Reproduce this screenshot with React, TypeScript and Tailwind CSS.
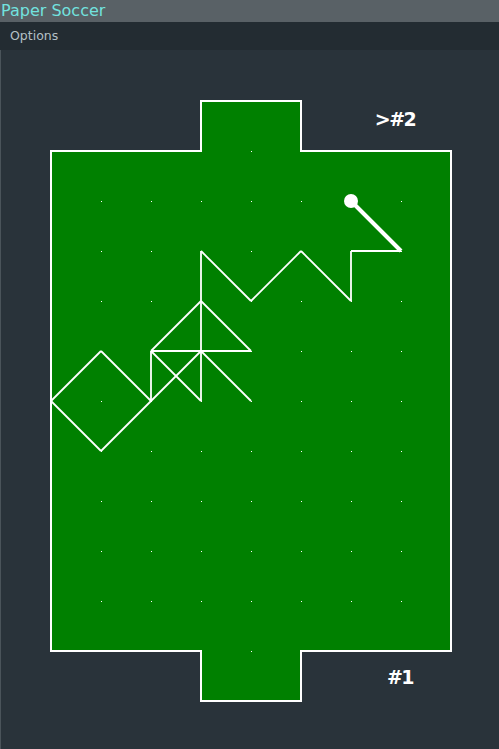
import React from 'react';

type Seg = [number, number, number, number];

// grid is 50px apart, field corners at (51,151) - (451,651)
const path: Seg[] = [
  [251, 401, 201, 351],
  [151, 351, 251, 351],
  [201, 301, 251, 351],
  [151, 351, 201, 301],
  [201, 251, 201, 401],
  [201, 401, 151, 351],
  [151, 351, 151, 401],
  [151, 401, 201, 351],
  [101, 351, 151, 401],
  [51, 401, 101, 351],
  [51, 401, 101, 451],
  [101, 451, 151, 401],
  [201, 251, 251, 301],
  [251, 301, 301, 251],
  [301, 251, 351, 301],
  [351, 301, 351, 251],
  [351, 251, 401, 251],
];

const border =
  '51,151 201,151 201,101 301,101 301,151 451,151 451,651 301,651 301,701 201,701 201,651 51,651 51,151';

function Board() {
  const dots: [number, number][] = [];
  for (let x = 101; x <= 401; x += 50) {
    for (let y = 201; y <= 601; y += 50) dots.push([x, y]);
  }
  dots.push([251, 151], [251, 651]);

  return (
    <svg width={498} height={699} viewBox="1 50 498 699" className="block">
      <polygon points={border} fill="#008000" stroke="#ffffff" strokeWidth={2} />
      {dots.map(([x, y]) => (
        <rect key={`${x}-${y}`} x={x} y={y} width={1} height={1} fill="#ffffff" />
      ))}
      {path.map(([x1, y1, x2, y2], i) => (
        <line key={i} x1={x1} y1={y1} x2={x2} y2={y2} stroke="#ffffff" strokeWidth={1.8} />
      ))}
      <line x1={401} y1={251} x2={351} y2={201} stroke="#ffffff" strokeWidth={4} />
      <circle cx={351} cy={201} r={7} fill="#ffffff" />
      <text
        x={395}
        y={126}
        textAnchor="middle"
        fill="#ffffff"
        fontSize={19}
        fontWeight="bold"
        letterSpacing={-1.5}
        fontFamily="'DejaVu Sans', sans-serif"
      >
        &gt;#2
      </text>
      <text
        x={400}
        y={684}
        textAnchor="middle"
        fill="#ffffff"
        fontSize={19}
        fontWeight="bold"
        letterSpacing={-1.5}
        fontFamily="'DejaVu Sans', sans-serif"
      >
        #1
      </text>
    </svg>
  );
}

export default function App() {
  return (
    <div className="w-[499px] h-[749px] flex flex-col overflow-hidden bg-[#29333a] font-['DejaVu_Sans',sans-serif]">
      <div className="h-[22px] bg-[#596166] flex items-center px-[1px]">
        <span className="text-[16px] leading-none text-[#72e2df]">Paper Soccer</span>
      </div>
      <div className="h-[28px] bg-[#232c32] flex items-center px-[10px]">
        <span className="text-[12.5px] leading-none text-[#b4c0c6]">Options</span>
      </div>
      <div className="flex-1 border-l border-[#4a545a] bg-[#29333a]">
        <Board />
      </div>
    </div>
  );
}
